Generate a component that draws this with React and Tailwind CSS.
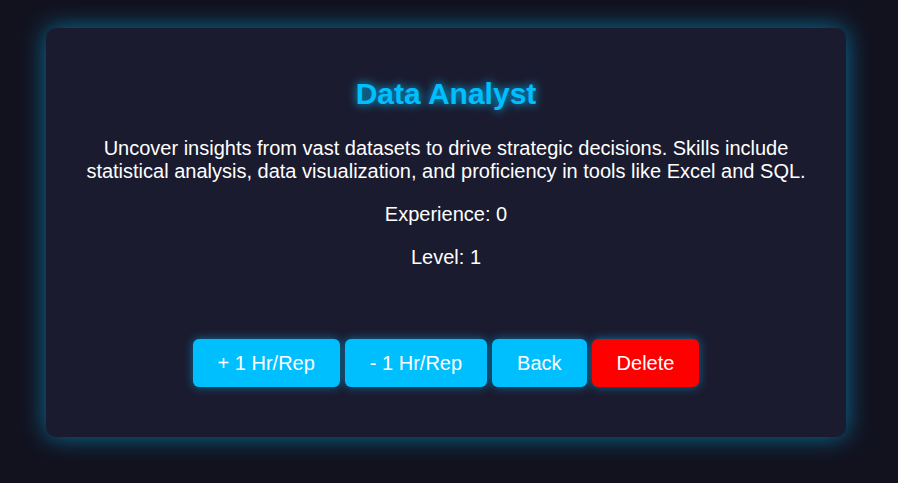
export default function App() {
  const buttons = [
    { label: '+ 1 Hr/Rep', color: 'bg-[#00bfff]' },
    { label: '- 1 Hr/Rep', color: 'bg-[#00bfff]' },
    { label: 'Back', color: 'bg-[#00bfff]' },
    { label: 'Delete', color: 'bg-[#ff0000]' },
  ]

  return (
    <div className="min-h-screen bg-[#12121f] pt-[28px] pl-[46px] font-['Liberation_Sans',Arial,sans-serif]">
      <div className="w-[800px] h-[409px] rounded-[10px] bg-[#1b1b2f] shadow-[0_0_25px_rgba(0,191,255,0.55)] px-[30px] flex flex-col items-center text-center text-white">
        <h2 className="mt-[49px] text-[30px] leading-[34.5px] font-bold text-[#00bfff] [text-shadow:0_0_10px_#00bfff]">
          Data Analyst
        </h2>
        <p className="mt-[25px] text-[20px] leading-[23px]">
          Uncover insights from vast datasets to drive strategic decisions. Skills include statistical analysis, data visualization, and proficiency in tools like Excel and SQL.
        </p>
        <p className="mt-[20px] text-[20px] leading-[23px]">Experience: 0</p>
        <p className="mt-[20px] text-[20px] leading-[23px]">Level: 1</p>
        <div className="mt-[70px] flex justify-center gap-[5px]">
          {buttons.map((b) => (
            <button
              key={b.label}
              className={`${b.color} text-white text-[20px] leading-[24px] px-[25px] py-[12px] rounded-[6px] shadow-[0_0_10px_rgba(0,191,255,0.5)]`}
            >
              {b.label}
            </button>
          ))}
        </div>
      </div>
    </div>
  )
}
